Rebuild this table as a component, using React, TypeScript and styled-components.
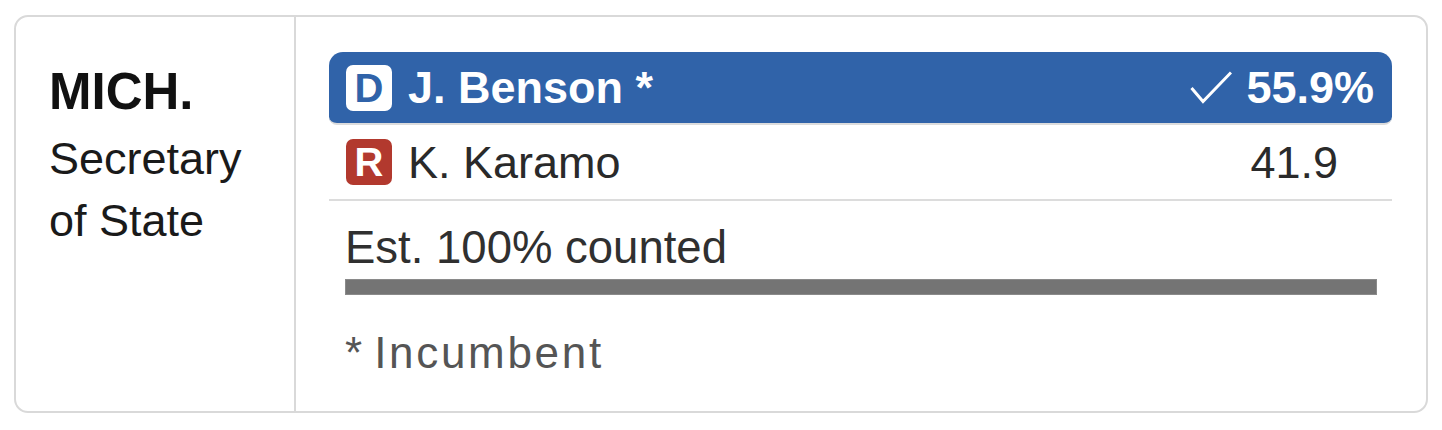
import React from "react";
import styled, { createGlobalStyle } from "styled-components";

const Global = createGlobalStyle`
  html, body { margin: 0; padding: 0; background: #ffffff; }
  body { font-family: "Liberation Sans", Arial, sans-serif; }
`;

const Card = styled.div`
  margin: 15px 0 0 14px;
  width: 1414px;
  box-sizing: border-box;
  border: 2px solid #d9d9d9;
  border-radius: 14px;
  display: flex;
  background: #fff;
`;

const LeftCol = styled.div`
  flex: none;
  width: 280px;
  box-sizing: border-box;
  border-right: 2px solid #d9d9d9;
  padding: 49px 0 0 33px;
`;

const State = styled.div`
  font-weight: 700;
  font-size: 51px;
  line-height: 51px;
  color: #111;
`;

const Office = styled.div`
  margin-top: 11px;
  font-size: 45px;
  line-height: 62px;
  color: #1a1a1a;
`;

const RightCol = styled.div`
  flex: 1;
  padding: 35px 34px 36px 33px;
  display: flex;
  flex-direction: column;
`;

const Row = styled.div<{ $winner?: boolean }>`
  display: flex;
  align-items: center;
  height: ${(p) => (p.$winner ? 71 : 74)}px;
  padding: 0 0 0 17px;
  border-bottom: 2px solid #dcdcdc;
  background: ${(p) => (p.$winner ? "#3063a9" : "transparent")};
  border-radius: ${(p) => (p.$winner ? "14px 14px 8px 8px" : "0")};
  color: ${(p) => (p.$winner ? "#ffffff" : "#2a2a2a")};
  font-weight: ${(p) => (p.$winner ? 700 : 400)};
  font-size: 45px;
`;

const Badge = styled.div<{ $party: "D" | "R" }>`
  width: 46px;
  height: 46px;
  flex: none;
  border-radius: 7px;
  display: flex;
  align-items: center;
  justify-content: center;
  font-weight: 700;
  font-size: 40px;
  line-height: 1;
  background: ${(p) => (p.$party === "D" ? "#ffffff" : "#b2392e")};
  color: ${(p) => (p.$party === "D" ? "#3063a9" : "#ffffff")};
`;

const Name = styled.div`
  margin-left: 16px;
  flex: 1;
  line-height: 1;
`;

const Value = styled.div<{ $pad: number }>`
  display: flex;
  align-items: center;
  line-height: 1;
  padding-right: ${(p) => p.$pad}px;
`;

const Check = styled.svg`
  width: 42px;
  height: 33px;
  margin-right: 14px;
`;

const Counted = styled.div`
  margin-top: 24px;
  padding: 0 16px;
  font-size: 45.5px;
  line-height: 45px;
  color: #303030;
`;

const BarTrack = styled.div`
  margin: 9px 15px 0 16px;
  height: 16px;
  background: #e6e6e6;
`;

const BarFill = styled.div`
  height: 100%;
  background: #747474;
  box-shadow: inset 0 0 0 1px #8a8a8a;
`;

const Note = styled.div`
  margin-top: 35px;
  padding: 0 16px;
  font-size: 44px;
  line-height: 45px;
  letter-spacing: 2.7px;
  color: #555;
`;

const Star = styled.span`
  letter-spacing: 0;
  margin-right: 12px;
`;

export default function App() {
  const counted = 100;
  return (
    <>
      <Global />
      <Card>
        <LeftCol>
          <State>MICH.</State>
          <Office>
            Secretary
            <br />
            of State
          </Office>
        </LeftCol>
        <RightCol>
          <Row $winner>
            <Badge $party="D">D</Badge>
            <Name>J. Benson *</Name>
            <Value $pad={18}>
              <Check viewBox="0 0 42 33">
                <polyline
                  points="1.5,17 13,30.5 41,1.5"
                  fill="none"
                  stroke="#ffffff"
                  strokeWidth="3"
                />
              </Check>
              55.9%
            </Value>
          </Row>
          <Row>
            <Badge $party="R">R</Badge>
            <Name>K. Karamo</Name>
            <Value $pad={54}>41.9</Value>
          </Row>
          <Counted>Est. 100% counted</Counted>
          <BarTrack>
            <BarFill style={{ width: `${counted}%` }} />
          </BarTrack>
          <Note>
            <Star>*</Star>Incumbent
          </Note>
        </RightCol>
      </Card>
    </>
  );
}
